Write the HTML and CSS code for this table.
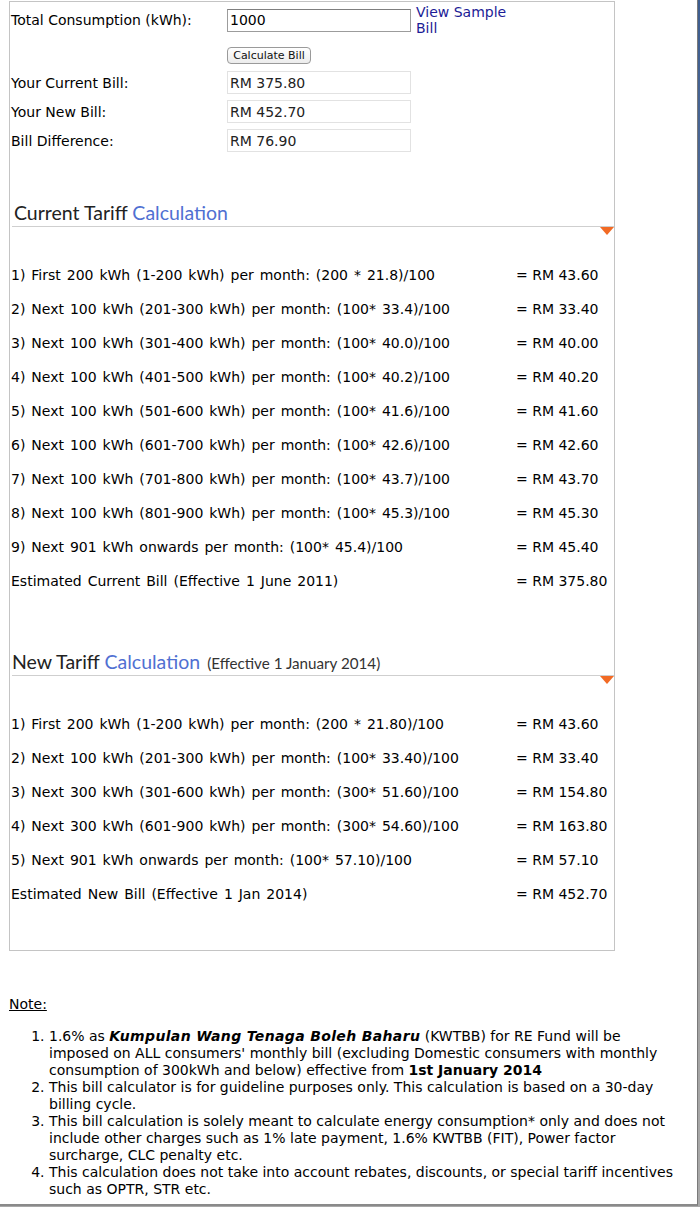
FILE: index.html
```html
<!DOCTYPE html>
<html>
<head>
<meta charset="utf-8">
<link rel="stylesheet" href="styles.css">
</head>
<body>
<div class="page">
  <div class="box">
    <div class="form">
      <div class="frow first">
        <div class="label">Total Consumption (kWh):</div>
        <div class="field"><input class="in main" type="text" value="1000"></div>
        <a class="link" href="#">View Sample<br>Bill</a>
      </div>
      <div class="frow btnrow">
        <div class="label"></div>
        <div class="field"><button class="btn">Calculate Bill</button></div>
      </div>
      <div class="frow res r1">
        <div class="label">Your Current Bill:</div>
        <div class="field"><input class="in out" type="text" value="RM 375.80"></div>
      </div>
      <div class="frow res">
        <div class="label">Your New Bill:</div>
        <div class="field"><input class="in out" type="text" value="RM 452.70"></div>
      </div>
      <div class="frow res">
        <div class="label">Bill Difference:</div>
        <div class="field"><input class="in out" type="text" value="RM 76.90"></div>
      </div>
    </div>

    <div class="section current">
      <h2 class="head"><span class="dark">Current Tariff</span> <span class="blue">Calculation</span><i class="tri"></i></h2>
      <div class="rows">
        <div class="row"><span>1) First 200 kWh (1-200 kWh) per month: (200 * 21.8)/100</span><span class="amt">= RM 43.60</span></div>
        <div class="row"><span>2) Next 100 kWh (201-300 kWh) per month: (100* 33.4)/100</span><span class="amt">= RM 33.40</span></div>
        <div class="row"><span>3) Next 100 kWh (301-400 kWh) per month: (100* 40.0)/100</span><span class="amt">= RM 40.00</span></div>
        <div class="row"><span>4) Next 100 kWh (401-500 kWh) per month: (100* 40.2)/100</span><span class="amt">= RM 40.20</span></div>
        <div class="row"><span>5) Next 100 kWh (501-600 kWh) per month: (100* 41.6)/100</span><span class="amt">= RM 41.60</span></div>
        <div class="row"><span>6) Next 100 kWh (601-700 kWh) per month: (100* 42.6)/100</span><span class="amt">= RM 42.60</span></div>
        <div class="row"><span>7) Next 100 kWh (701-800 kWh) per month: (100* 43.7)/100</span><span class="amt">= RM 43.70</span></div>
        <div class="row"><span>8) Next 100 kWh (801-900 kWh) per month: (100* 45.3)/100</span><span class="amt">= RM 45.30</span></div>
        <div class="row"><span>9) Next 901 kWh onwards per month: (100* 45.4)/100</span><span class="amt">= RM 45.40</span></div>
        <div class="row"><span>Estimated Current Bill (Effective 1 June 2011)</span><span class="amt">= RM 375.80</span></div>
      </div>
    </div>

    <div class="section new">
      <h2 class="head"><span class="dark">New Tariff</span> <span class="blue">Calculation</span> <span class="small">(Effective 1 January 2014)</span><i class="tri"></i></h2>
      <div class="rows">
        <div class="row"><span>1) First 200 kWh (1-200 kWh) per month: (200 * 21.80)/100</span><span class="amt">= RM 43.60</span></div>
        <div class="row"><span>2) Next 100 kWh (201-300 kWh) per month: (100* 33.40)/100</span><span class="amt">= RM 33.40</span></div>
        <div class="row"><span>3) Next 300 kWh (301-600 kWh) per month: (300* 51.60)/100</span><span class="amt">= RM 154.80</span></div>
        <div class="row"><span>4) Next 300 kWh (601-900 kWh) per month: (300* 54.60)/100</span><span class="amt">= RM 163.80</span></div>
        <div class="row"><span>5) Next 901 kWh onwards per month: (100* 57.10)/100</span><span class="amt">= RM 57.10</span></div>
        <div class="row"><span>Estimated New Bill (Effective 1 Jan 2014)</span><span class="amt">= RM 452.70</span></div>
      </div>
    </div>
  </div>

  <div class="notes">
    <div class="note-title">Note:</div>
    <ol class="list">
      <li>1.6% as <b class="kw"><i>Kumpulan Wang Tenaga Boleh Baharu</i></b> (KWTBB) for RE Fund will be imposed on ALL consumers' monthly bill (excluding Domestic consumers with monthly consumption of 300kWh and below) effective from <b>1st January 2014</b></li>
      <li>This bill calculator is for guideline purposes only. This calculation is based on a 30-day billing cycle.</li>
      <li>This bill calculation is solely meant to calculate energy consumption* only and does not include other charges such as 1% late payment, 1.6% KWTBB (FIT), Power factor surcharge, CLC penalty etc.</li>
      <li>This calculation does not take into account rebates, discounts, or special tariff incentives such as OPTR, STR etc.</li>
    </ol>
  </div>
</div>
</body>
</html>
```

FILE: styles.css
```css
html, body {
  margin: 0;
  padding: 0;
}
body {
  background: linear-gradient(to bottom, #3d5d8f 0px, #56709a 300px, #9a9a9a 700px, #a8a8a8 100%);
  min-height: 1207px;
  font-family: "DejaVu Sans", Verdana, sans-serif;
  font-size: 14px;
  color: #000;
}
.page {
  width: 698px;
  background: #fff;
  border-right: 1px solid #7a7a7a;
  border-bottom: 2px solid #8a8a8a;
  padding: 1px 0 6px 9px;
  box-sizing: border-box;
}
.box {
  width: 606px;
  box-sizing: border-box;
  border: 1px solid #c4c4c4;
  padding: 2px 0 39px 1px;
}
.form {
  display: flex;
  flex-direction: column;
}
.frow {
  display: flex;
  align-items: center;
}
.frow.first {
  height: 32px;
}
.frow.btnrow {
  margin-top: 11px;
  height: 17px;
}
.frow.res {
  margin-top: 6px;
  height: 23px;
}
.frow.res.r1 {
  margin-top: 7px;
}
.label {
  width: 216px;
  flex: none;
}
.field {
  width: 184px;
  flex: none;
  display: flex;
}
.in {
  width: 184px;
  height: 23px;
  box-sizing: border-box;
  margin: 0;
  padding: 0 2px;
  font-family: "DejaVu Sans", Verdana, sans-serif;
  font-size: 14px;
  color: #000;
  background: #fff;
  outline: none;
}
.in.main {
  border: 1px solid #9c9c9c;
  border-top-color: #7f7f7f;
}
.in.out {
  border: 1px solid #e2e2e2;
  color: #222;
}
.btn {
  height: 17px;
  width: 84px;
  padding: 0;
  font-family: "DejaVu Sans", Verdana, sans-serif;
  font-size: 11px;
  color: #111;
  border: 1px solid #9a9a9a;
  border-radius: 4px;
  background: linear-gradient(to bottom, #ffffff, #ececec);
}
.link {
  margin-left: 5px;
  color: #1c1c96;
  text-decoration: none;
  line-height: 16px;
  font-size: 14px;
}
.section.current {
  margin-top: 48px;
}
.section.new {
  margin-top: 51px;
}
.head {
  position: relative;
  margin: 0 0 0 1px;
  height: 26px;
  line-height: 26px;
  border-bottom: 1px solid #cfcfcf;
  font-family: Lato, sans-serif;
  font-weight: normal;
  font-size: 19.5px;
  white-space: nowrap;
}
.current .head .dark {
  margin-left: 2px;
}
.dark {
  color: #222;
}
.blue {
  color: #5070d2;
}
.small {
  font-size: 15.2px;
  color: #333;
  margin-left: 2px;
}
.tri {
  position: absolute;
  right: 0;
  bottom: -9px;
  width: 0;
  height: 0;
  border-left: 7px solid transparent;
  border-right: 7px solid transparent;
  border-top: 8px solid #f26a24;
}
.rows {
  margin-top: 31px;
}
.row {
  display: flex;
  justify-content: space-between;
  height: 34px;
  line-height: 34px;
  white-space: nowrap;
  word-spacing: 1.5px;
}
.amt {
  width: 98px;
  flex: none;
  word-spacing: 0;
}
.notes {
  padding-top: 45px;
}
.note-title {
  text-decoration: underline;
  line-height: 17px;
}
.list {
  margin: 15px 0 0 0;
  padding-left: 40px;
  padding-right: 14px;
  line-height: 17px;
}
.kw {
  letter-spacing: 0.35px;
}
```
